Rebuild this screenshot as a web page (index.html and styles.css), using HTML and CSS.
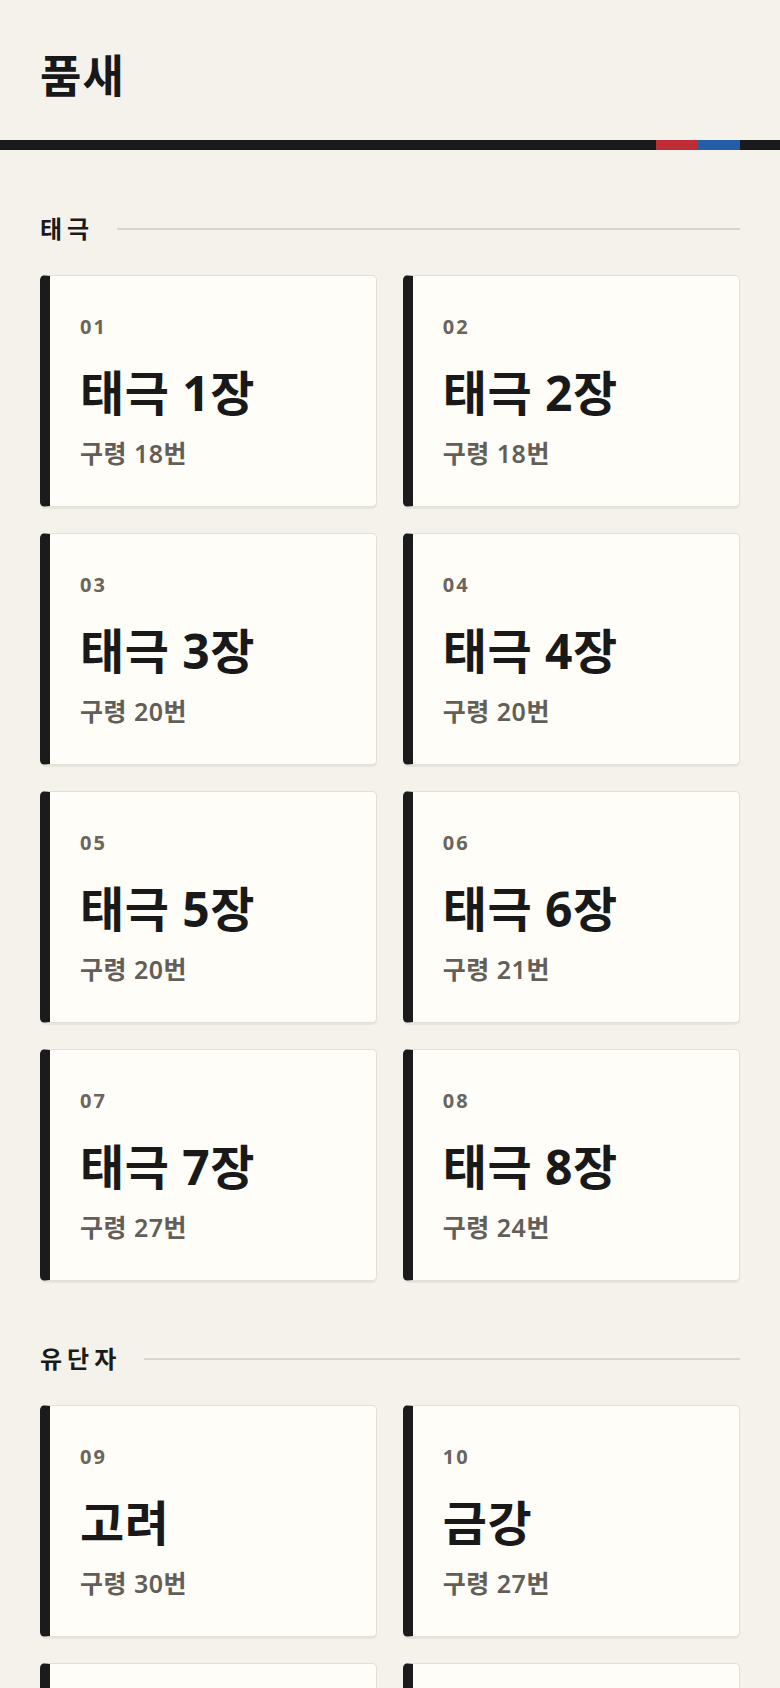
FILE: index.html
```html
<!DOCTYPE html>
<html lang="ko">
<head>
<meta charset="utf-8">
<title>품새</title>
<link rel="stylesheet" href="styles.css">
</head>
<body>
<header class="top">
  <h1 class="top-title">품새</h1>
</header>
<div class="stripe">
  <span class="stripe-dark"></span>
  <span class="stripe-red"></span>
  <span class="stripe-blue"></span>
  <span class="stripe-end"></span>
</div>
<main class="content">
  <section class="group">
    <div class="group-head">
      <h2 class="group-title">태극</h2>
      <span class="group-rule"></span>
    </div>
    <div class="grid">
      <a class="card"><span class="card-num">01</span><span class="card-name">태극 1장</span><span class="card-sub">구령 18번</span></a>
      <a class="card"><span class="card-num">02</span><span class="card-name">태극 2장</span><span class="card-sub">구령 18번</span></a>
      <a class="card"><span class="card-num">03</span><span class="card-name">태극 3장</span><span class="card-sub">구령 20번</span></a>
      <a class="card"><span class="card-num">04</span><span class="card-name">태극 4장</span><span class="card-sub">구령 20번</span></a>
      <a class="card"><span class="card-num">05</span><span class="card-name">태극 5장</span><span class="card-sub">구령 20번</span></a>
      <a class="card"><span class="card-num">06</span><span class="card-name">태극 6장</span><span class="card-sub">구령 21번</span></a>
      <a class="card"><span class="card-num">07</span><span class="card-name">태극 7장</span><span class="card-sub">구령 27번</span></a>
      <a class="card"><span class="card-num">08</span><span class="card-name">태극 8장</span><span class="card-sub">구령 24번</span></a>
    </div>
  </section>
  <section class="group">
    <div class="group-head">
      <h2 class="group-title">유단자</h2>
      <span class="group-rule"></span>
    </div>
    <div class="grid">
      <a class="card"><span class="card-num">09</span><span class="card-name">고려</span><span class="card-sub">구령 30번</span></a>
      <a class="card"><span class="card-num">10</span><span class="card-name">금강</span><span class="card-sub">구령 27번</span></a>
      <a class="card"><span class="card-num">11</span><span class="card-name">태백</span><span class="card-sub">구령 26번</span></a>
      <a class="card"><span class="card-num">12</span><span class="card-name">평원</span><span class="card-sub">구령 21번</span></a>
    </div>
  </section>
</main>
</body>
</html>
```

FILE: styles.css
```css
* { box-sizing: border-box; }

html, body {
  margin: 0;
  padding: 0;
}

body {
  background: #f4f2eb;
  color: #1a1a1a;
  font-family: "Noto Sans", "Noto Sans CJK KR", sans-serif;
}

.top {
  height: 140px;
  padding: 10px 40px 0;
  display: flex;
  align-items: center;
}

.top-title {
  margin: 0;
  font-size: 45px;
  line-height: 1;
  font-weight: 700;
  letter-spacing: 1px;
  color: #18181a;
}

.stripe {
  display: flex;
  height: 10px;
}

.stripe-dark { flex: 1; background: #1a1a1d; }
.stripe-red { width: 42px; background: #be2d37; }
.stripe-blue { width: 42px; background: #245ea6; }
.stripe-end { width: 40px; background: #1a1a1d; }

.content {
  padding: 0 40px 40px;
}

.group {
  padding-top: 67px;
}

.group + .group {
  padding-top: 66px;
}

.group-head {
  display: flex;
  align-items: center;
  gap: 23px;
  margin-bottom: 34px;
}

.group-title {
  margin: 0;
  font-size: 24px;
  line-height: 24px;
  font-weight: 700;
  letter-spacing: 5px;
  color: #1a1a1a;
}

.group-rule {
  flex: 1;
  height: 2px;
  background: #d8d5ce;
}

.grid {
  display: grid;
  grid-template-columns: 1fr 1fr;
  gap: 26px 25.6px;
}

.card {
  display: flex;
  flex-direction: column;
  height: 232px;
  padding: 39px 30px 0;
  background: #fefdf8;
  border: 1px solid #e2dfd7;
  border-left: 10px solid #1b1b1b;
  border-radius: 5px;
  box-shadow: 0 2px 1px rgba(60, 50, 30, 0.07);
  color: inherit;
  text-decoration: none;
}

.card-num {
  font-size: 20px;
  line-height: 24px;
  font-weight: 700;
  letter-spacing: 2px;
  color: #6b655c;
}

.card-name {
  margin-top: 25px;
  font-size: 48px;
  line-height: 1.2;
  font-weight: 700;
  letter-spacing: 0.5px;
  color: #19191a;
}

.card-sub {
  margin-top: 16px;
  font-size: 25px;
  line-height: 30px;
  font-weight: 600;
  letter-spacing: 0.5px;
  color: #635e57;
}
```
